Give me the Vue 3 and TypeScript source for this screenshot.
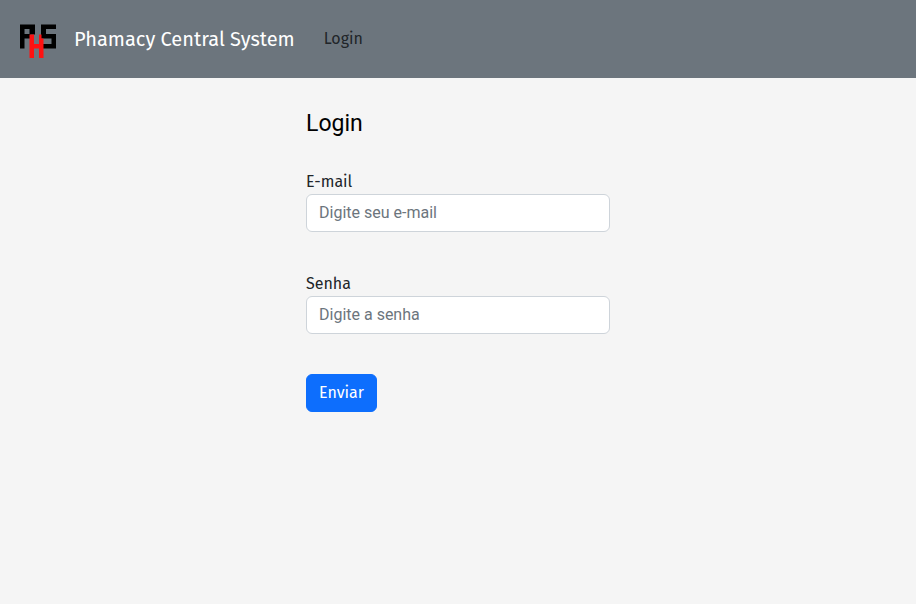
<script setup lang="ts">
import { ref } from 'vue'

const email = ref('')
const password = ref('')
</script>

<template>
  <div class="page">
    <header class="navbar">
      <a class="brand" href="#">
        <svg class="logo" viewBox="0 0 38 38" aria-hidden="true">
          <g fill="#000">
            <path d="M1 4.500h15v10h-4.500v4h-6v10H1zM5.500 9v5h5V9z" fill-rule="evenodd" />
            <path d="M22 4.500H37V9H27v5h10v14.500H23V24h9.500v-5.500H22z" />
          </g>
          <path d="M10.500 14.500h4.500v9.500h5v-9.500h2.500v4H24.500V38H20v-9.500h-5V38h-4.500z" fill="#f11" />
        </svg>
        <span>Phamacy Central System</span>
      </a>
      <nav>
        <a class="nav-link" href="#">Login</a>
      </nav>
    </header>
    <main>
      <form class="login" @submit.prevent>
        <h1>Login</h1>
        <div class="field">
          <label for="email">E-mail</label>
          <input id="email" v-model="email" type="email" placeholder="Digite seu e-mail" />
        </div>
        <div class="field">
          <label for="password">Senha</label>
          <input id="password" v-model="password" type="password" placeholder="Digite a senha" />
        </div>
        <button type="submit">Enviar</button>
      </form>
    </main>
  </div>
</template>

<style>
body {
  margin: 0;
  background: #f5f5f5;
}
</style>

<style scoped>
.page {
  color: #212529;
  font: 16px/24px "Fira Sans", Roboto, sans-serif;
}
.navbar {
  display: flex;
  align-items: center;
  gap: 29px;
  min-height: 78px;
  padding: 0 19px;
  box-sizing: border-box;
  background: #6c757d;
}
.brand {
  display: flex;
  align-items: center;
  gap: 17px;
  color: #fff;
  font-size: 20px;
  line-height: 30px;
  text-decoration: none;
}
.logo {
  display: block;
  width: 38px;
  height: 38px;
}
.nav-link {
  color: #212529;
  text-decoration: none;
}
main {
  display: flex;
  justify-content: center;
  padding: 28px 16px;
}
.login {
  width: 100%;
  max-width: 304px;
}
h1 {
  margin: 0 0 28px;
  color: #000;
  font: 400 23px/36px Roboto, sans-serif;
}
.field {
  margin-bottom: 40px;
}
label {
  display: block;
}
input {
  display: block;
  width: 100%;
  height: 38px;
  box-sizing: border-box;
  padding: 5px 12px 7px;
  border: 1px solid #ced4da;
  border-radius: 6px;
  background: #fff;
  color: #212529;
  font: 16px/24px Roboto, sans-serif;
}
input::placeholder {
  color: #6c757d;
  opacity: 1;
}
button {
  padding: 6px 12px;
  border: 1px solid #0d6efd;
  border-radius: 6px;
  background: #0d6efd;
  color: #fff;
  font: inherit;
  cursor: pointer;
}
</style>
